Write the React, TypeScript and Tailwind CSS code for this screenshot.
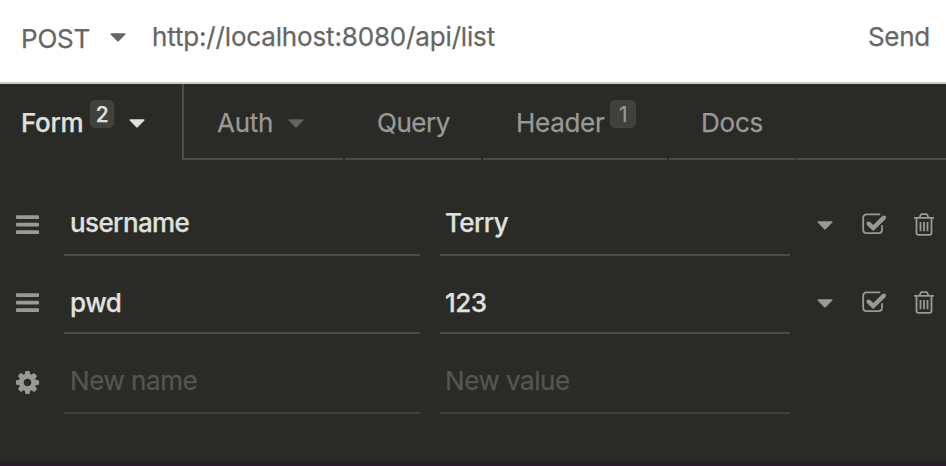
import React from 'react';

function Caret({ className = '' }: { className?: string }) {
  return (
    <svg className={`block h-[9px] w-[16px] shrink-0 ${className}`} viewBox="0 0 16 9" fill="currentColor">
      <path d="M1.4.2H14.6Q16.2.5 15.1 1.800L9 8Q8 9 7 8L.9 1.800Q-.2.5 1.4.2Z" />
    </svg>
  );
}

function Bars() {
  return (
    <svg className="block h-[20px] w-[23px] shrink-0" viewBox="0 0 23 20" fill="currentColor">
      <rect x="0" y="0.2" width="23" height="3.8" rx="0.8" />
      <rect x="0" y="7.8" width="23" height="3.8" rx="0.8" />
      <rect x="0" y="15.200" width="23" height="3.800" rx="0.8" />
    </svg>
  );
}

function Gear() {
  return (
    <svg className="block h-[23px] w-[23px] shrink-0" viewBox="0 0 1536 1536" fill="currentColor">
      <path d="M1024 768q0-106-75-181t-181-75-181 75-75 181 75 181 181 75 181-75 75-181zm512-109v222q0 12-8 23t-20 13l-185 28q-19 54-39 91 35 50 107 138 10 12 10 25t-9 23q-27 37-99 108t-94 71q-12 0-26-9l-138-108q-44 23-91 38-16 136-29 186-7 28-36 28H657q-14 0-24.500-8.500T621 1506l-28-184q-49-16-90-37l-141 107q-10 9-25 9-14 0-25-11-126-114-165-168-7-10-7-23 0-12 8-23 15-21 51-66.500t54-70.500q-27-50-41-99L29 913q-13-2-21-12.500T0 877V655q0-12 8-23t19-13l186-28q14-46 39-92-40-57-107-138-10-12-10-24 0-10 9-23 26-36 98.500-107.500T337 135q13 0 26 10l138 107q44-23 91-38 16-136 29-186 7-28 36-28h222q14 0 24.500 8.500T915 30l28 184q49 16 90 37l142-107q9-9 24-9 13 0 25 10 129 119 165 170 7 8 7 22 0 12-8 23-15 21-51 66.500t-54 70.500q26 50 41 98l183 28q13 2 21 12.500t8 23.500z" />
    </svg>
  );
}

function CheckBox() {
  return (
    <svg className="block h-[22px] w-[26px] shrink-0" viewBox="0 0 26 22" fill="none" stroke="currentColor">
      <path d="M17.500 1.400H4.800Q1.200 1.400 1.200 5V16.500Q1.200 20.200 4.800 20.200H16.400Q20 20.200 20 16.500V12.800" strokeWidth="1.800" strokeLinecap="round" />
      <path d="M6.100 10.100L11.200 15L22.400 4.100" strokeWidth="4.400" strokeLinejoin="miter" strokeLinecap="butt" />
      <path d="M6.100 10.100L11.200 15L22.400 4.100" strokeWidth="3.200" strokeLinecap="round" />
    </svg>
  );
}

function Trash() {
  return (
    <svg className="block h-[23px] w-[20px] shrink-0" viewBox="0 0 20 23" fill="none" stroke="currentColor" strokeWidth="1.800">
      <path d="M0 4.900H20M5.600 4.500L6.700 1.900Q7 1.200 7.800 1.200H12.200Q13 1.200 13.300 1.900L14.400 4.500" />
      <path d="M2.500 5V20Q2.500 21.900 4.300 21.900H15.700Q17.500 21.900 17.500 20V5" />
      <path d="M6.500 9V18.200M10 9V18.200M13.500 9V18.200" />
    </svg>
  );
}

function Badge({ children, className = '' }: { children: React.ReactNode; className?: string }) {
  return (
    <span className={`mt-[16px] flex h-[28px] items-center justify-center rounded-[5px] border border-[#444440] bg-[#40403c] text-[21px] leading-none ${className}`}>
      {children}
    </span>
  );
}

interface RowProps {
  height: string;
  name: string;
  value: string;
  muted?: boolean;
  textClass?: string;
}

function Row({ height, name, value, muted = false, textClass = '' }: RowProps) {
  const field = `flex h-[64px] items-center border-b-2 ${muted ? 'border-[#41413d] text-[#555552]' : 'border-[#4b4b48] font-medium text-[#e0e0df]'}`;
  return (
    <div className={`flex items-end pl-[16px] ${height}`}>
      <div className={`flex h-[64px] w-[48px] items-center text-[#999997] ${muted ? 'pt-[1px]' : 'pt-[2px]'}`}>
        {muted ? <Gear /> : <Bars />}
      </div>
      <div className={`${field} mr-[20px] w-[356px] pl-[6px]`}><span className={textClass}>{name}</span></div>
      <div className={`${field} w-[350px] pl-[5px]`}><span className={textClass}>{value}</span></div>
      {!muted && (
        <div className="ml-[27px] flex h-[64px] items-center text-[#999997]">
          <Caret className="mt-[2px]" />
          <span className="ml-[29px]"><CheckBox /></span>
          <span className="mt-px ml-[26px]"><Trash /></span>
        </div>
      )}
    </div>
  );
}

export default function App() {
  return (
    <div className="flex h-[466px] w-[946px] flex-col overflow-hidden bg-[#2a2a26] font-['Inter',sans-serif] text-[26px] leading-none tracking-[-0.450px] whitespace-nowrap [-webkit-text-stroke:0.250px_currentColor]">
      <header className="flex h-[84px] items-center border-b-2 border-[#c9c9c9] bg-white pr-[16px] pb-[8px] pl-[21px] text-[#666665]">
        <span className="w-[89px] pt-[4px] tracking-[-0.200px]">POST</span>
        <Caret />
        <span className="ml-[26px] tracking-[-0.160px]">http://localhost:8080/api/list</span>
        <span className="ml-auto tracking-[-0.250px]">Send</span>
      </header>
      <nav className="flex h-[76px] text-[#999997]">
        <div className="flex w-[184px] border-r-2 border-[#4b4b48] pl-[21px] font-medium text-[#e0e0df]">
          <span className="mt-[26px] w-[69px] tracking-[-0.300px]">Form</span>
          <Badge className="w-[24px]">2</Badge>
          <Caret className="mt-[35px] ml-[15px]" />
        </div>
        <div className="mr-[2px] flex w-[159px] border-b-2 border-[#4b4b48] pl-[33px]">
          <span className="mt-[26px] w-[71px] tracking-[-0.250px]">Auth</span>
          <Caret className="mt-[35px] text-[#62625f]" />
        </div>
        <div className="mr-[2px] w-[136px] border-b-2 border-[#4b4b48] pt-[26px] pl-[32px]">Query</div>
        <div className="mr-[2px] flex w-[184px] border-b-2 border-[#4b4b48] pl-[33px]">
          <span className="mt-[26px] w-[94px] tracking-[-0.300px]">Header</span>
          <Badge className="w-[26px]">1</Badge>
        </div>
        <div className="mr-[1px] w-[126px] border-b-2 border-[#4b4b48] pt-[26px] pl-[32px] tracking-[-0.200px]">Docs</div>
        <div className="flex-1 border-b-2 border-[#4b4b48]" />
      </nav>
      <main className="flex-1">
        <Row height="h-[96px]" name="username" value="Terry" textClass="tracking-[-0.600px]" />
        <Row height="h-[78px]" name="pwd" value="123" textClass="pt-[4px] tracking-[-0.500px]" />
        <Row height="h-[80px]" name="New name" value="New value" muted />
      </main>
      <footer className="h-[4px] bg-[#2a1f28]" />
    </div>
  );
}
